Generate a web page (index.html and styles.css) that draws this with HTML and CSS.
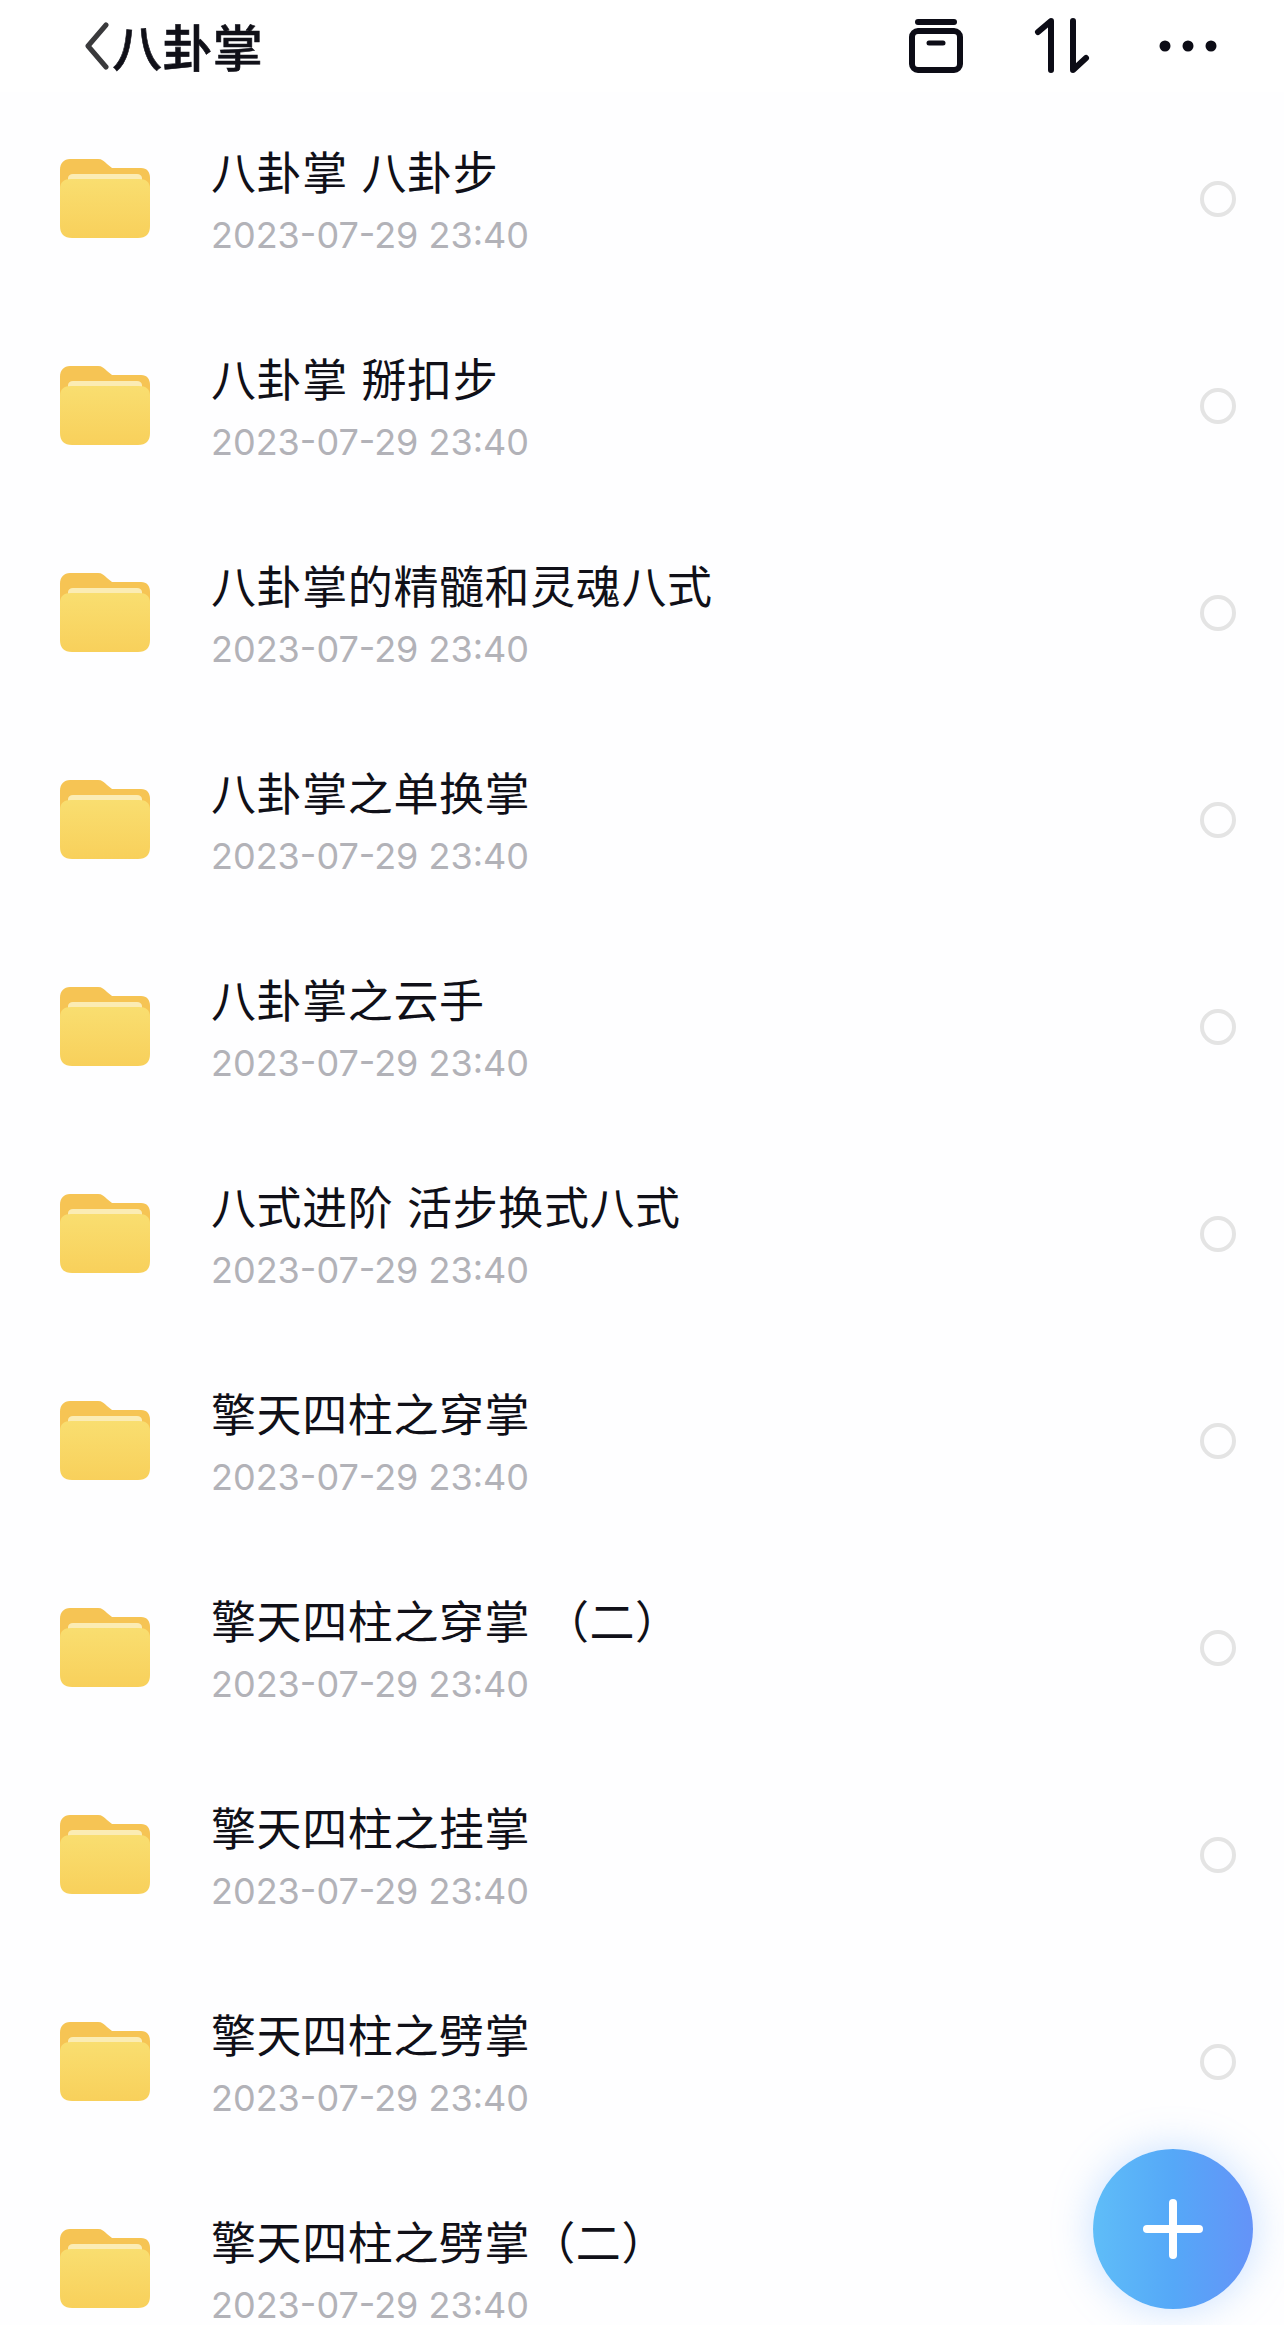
FILE: index.html
```html
<!DOCTYPE html>
<html>

<head>
	<meta charset='utf-8'>
	<title>八卦掌</title>
	<meta name='viewport' content='width=device-width, initial-scale=1'>
	<link rel="stylesheet" href="styles.css">
</head>

<body>
	<svg class="defs" width="0" height="0">
		<defs>
			<linearGradient id="folderBody" x1="0" y1="0" x2="0" y2="1">
				<stop offset="0" stop-color="#f9de70" />
				<stop offset="1" stop-color="#f8d05b" />
			</linearGradient>
			<symbol id="folder" viewBox="0 0 90 79">
				<path d="M0 11C0 4 4 0 10 0H38C42 0 44 2 47 5L52 9H81C87 9 90 13 90 19V32H0Z" fill="#f6c454" />
				<path d="M8 19C8 17 10 15 13 15H77C80 15 82 17 82 19V26H8Z" fill="#fbecb4" />
				<path d="M0 30C0 23 4 20 11 20H79C86 20 90 23 90 30V67C90 75 86 79 78 79H12C4 79 0 75 0 67Z" fill="url(#folderBody)" />
			</symbol>
		</defs>
	</svg>

	<header class="topbar">
		<div class="topbar-left">
			<svg class="back" viewBox="0 0 26 48">
				<path d="M22 3L4 24L22 45" fill="none" stroke="#3a3a3c" stroke-width="5" stroke-linecap="round" stroke-linejoin="round" />
			</svg>
			<span class="topbar-title">八卦掌</span>
		</div>
		<div class="topbar-icons">
			<svg class="icon" viewBox="0 0 60 60">
				<path d="M12 6H48" stroke="#0c0c16" stroke-width="6" stroke-linecap="round" />
				<rect x="6" y="15" width="48" height="39" rx="6" fill="none" stroke="#0c0c16" stroke-width="6" />
				<path d="M23 27H37" stroke="#0c0c16" stroke-width="5" stroke-linecap="round" />
			</svg>
			<svg class="icon" viewBox="0 0 60 60">
				<path d="M19 54V5L6 16M41 5V54L54 42" fill="none" stroke="#0c0c16" stroke-width="6" stroke-linecap="round" stroke-linejoin="round" />
			</svg>
			<svg class="icon" viewBox="0 0 60 60">
				<circle cx="7" cy="30" r="5.5" fill="#0c0c16" />
				<circle cx="30" cy="30" r="5.5" fill="#0c0c16" />
				<circle cx="53" cy="30" r="5.5" fill="#0c0c16" />
			</svg>
		</div>
	</header>

	<main class="list">
		<div class="row">
			<svg class="folder"><use href="#folder" /></svg>
			<div class="info">
				<div class="name">八卦掌 八卦步</div>
				<div class="date">2023-07-29 23:40</div>
			</div>
			<div class="radio"></div>
		</div>
		<div class="row">
			<svg class="folder"><use href="#folder" /></svg>
			<div class="info">
				<div class="name">八卦掌 掰扣步</div>
				<div class="date">2023-07-29 23:40</div>
			</div>
			<div class="radio"></div>
		</div>
		<div class="row">
			<svg class="folder"><use href="#folder" /></svg>
			<div class="info">
				<div class="name">八卦掌的精髓和灵魂八式</div>
				<div class="date">2023-07-29 23:40</div>
			</div>
			<div class="radio"></div>
		</div>
		<div class="row">
			<svg class="folder"><use href="#folder" /></svg>
			<div class="info">
				<div class="name">八卦掌之单换掌</div>
				<div class="date">2023-07-29 23:40</div>
			</div>
			<div class="radio"></div>
		</div>
		<div class="row">
			<svg class="folder"><use href="#folder" /></svg>
			<div class="info">
				<div class="name">八卦掌之云手</div>
				<div class="date">2023-07-29 23:40</div>
			</div>
			<div class="radio"></div>
		</div>
		<div class="row">
			<svg class="folder"><use href="#folder" /></svg>
			<div class="info">
				<div class="name">八式进阶 活步换式八式</div>
				<div class="date">2023-07-29 23:40</div>
			</div>
			<div class="radio"></div>
		</div>
		<div class="row">
			<svg class="folder"><use href="#folder" /></svg>
			<div class="info">
				<div class="name">擎天四柱之穿掌</div>
				<div class="date">2023-07-29 23:40</div>
			</div>
			<div class="radio"></div>
		</div>
		<div class="row">
			<svg class="folder"><use href="#folder" /></svg>
			<div class="info">
				<div class="name">擎天四柱之穿掌 （二）</div>
				<div class="date">2023-07-29 23:40</div>
			</div>
			<div class="radio"></div>
		</div>
		<div class="row">
			<svg class="folder"><use href="#folder" /></svg>
			<div class="info">
				<div class="name">擎天四柱之挂掌</div>
				<div class="date">2023-07-29 23:40</div>
			</div>
			<div class="radio"></div>
		</div>
		<div class="row">
			<svg class="folder"><use href="#folder" /></svg>
			<div class="info">
				<div class="name">擎天四柱之劈掌</div>
				<div class="date">2023-07-29 23:40</div>
			</div>
			<div class="radio"></div>
		</div>
		<div class="row">
			<svg class="folder"><use href="#folder" /></svg>
			<div class="info">
				<div class="name">擎天四柱之劈掌（二）</div>
				<div class="date">2023-07-29 23:40</div>
			</div>
			<div class="radio"></div>
		</div>
	</main>

	<div class="fab">
		<div class="fab-plus"></div>
	</div>
</body>

</html>
```
FILE: styles.css
```css
* {
	box-sizing: border-box;
}

html,
body {
	height: 100%;
}

body {
	position: relative;
	margin: 0;
	overflow: hidden;
	background: #fefeff;
	color: #101018;
	font-family: "Noto Sans CJK SC", "Noto Sans", sans-serif;
}

.defs {
	display: block;
	height: 0;
}

.topbar {
	display: flex;
	align-items: center;
	justify-content: space-between;
	height: 92px;
	padding: 0 66px 0 84px;
	background: #fff;
}

.topbar-left {
	display: flex;
	align-items: center;
}

.back {
	width: 26px;
	height: 48px;
	margin-right: 2px;
}

.topbar-title {
	font-size: 50px;
	line-height: 60px;
	letter-spacing: 0.4px;
	font-weight: 500;
	-webkit-text-stroke: 0.6px #14141c;
	transform: translateY(-1px);
}

.topbar-icons {
	display: flex;
	align-items: center;
	gap: 66px;
}

.icon {
	display: block;
	width: 60px;
	height: 60px;
}

.list {
	display: flex;
	flex-direction: column;
	padding-top: 3px;
}

.row {
	display: flex;
	flex: none;
	align-items: center;
	height: 207px;
	padding: 0 48px 0 60px;
}

.folder {
	flex: none;
	width: 90px;
	height: 79px;
}

.info {
	flex: 1;
	margin-left: 61px;
	margin-top: 4px;
}

.name {
	font-size: 45px;
	line-height: 60px;
	letter-spacing: 0.6px;
	word-spacing: 3px;
	white-space: pre;
}

.date {
	margin-top: 9px;
	font-family: Inter, "Liberation Sans", sans-serif;
	font-size: 36px;
	line-height: 50px;
	color: #b2b2b8;
}

.radio {
	flex: none;
	width: 36px;
	height: 36px;
	border: 4px solid #e4e4e4;
	border-radius: 50%;
}

.fab {
	position: absolute;
	left: 1093px;
	top: 2149px;
	display: flex;
	align-items: center;
	justify-content: center;
	width: 160px;
	height: 160px;
	border-radius: 50%;
	background: linear-gradient(to right, #5fbdf8, #55a8f8 50%, #6493f8);
	box-shadow: 0 0 40px rgba(120, 180, 255, 0.4);
}

.fab-plus {
	position: relative;
	width: 60px;
	height: 8px;
	border-radius: 4px;
	background: #fff;
}

.fab-plus::after {
	content: "";
	position: absolute;
	left: 26px;
	top: -26px;
	width: 8px;
	height: 60px;
	border-radius: 4px;
	background: #fff;
}
```
